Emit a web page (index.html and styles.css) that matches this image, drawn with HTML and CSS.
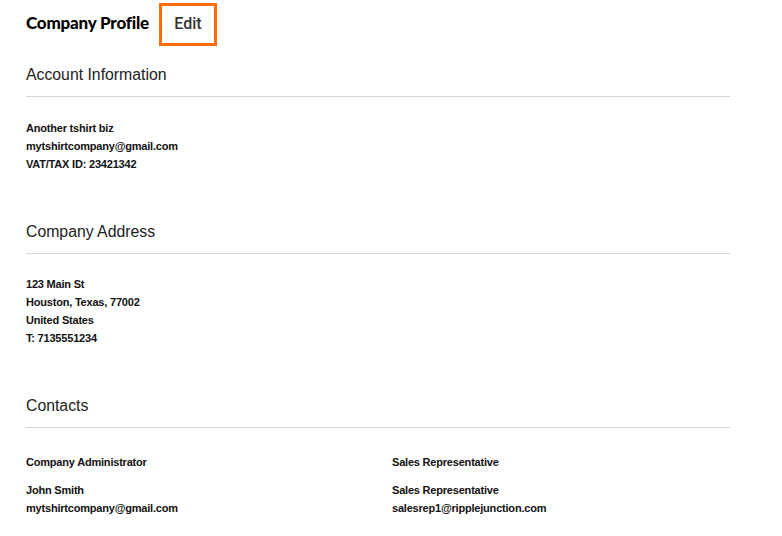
FILE: index.html
```html
<!DOCTYPE html>
<html>
<head>
<meta charset="utf-8">
<link rel="stylesheet" href="styles.css">
</head>
<body>
<div class="page">
  <div class="title-row">
    <h1 class="title">Company Profile</h1>
    <span class="edit">Edit</span>
  </div>

  <section class="block first">
    <h2 class="block-title">Account Information</h2>
    <div class="block-body">
      <div class="line">Another tshirt biz</div>
      <div class="line">mytshirtcompany@gmail.com</div>
      <div class="line">VAT/TAX ID: 23421342</div>
    </div>
  </section>

  <section class="block">
    <h2 class="block-title">Company Address</h2>
    <div class="block-body">
      <div class="line">123 Main St</div>
      <div class="line">Houston, Texas, 77002</div>
      <div class="line">United States</div>
      <div class="line">T: 7135551234</div>
    </div>
  </section>

  <section class="block">
    <h2 class="block-title">Contacts</h2>
    <div class="contacts">
      <div class="contact">
        <div class="line role">Company Administrator</div>
        <div class="line">John Smith</div>
        <div class="line">mytshirtcompany@gmail.com</div>
      </div>
      <div class="contact">
        <div class="line role">Sales Representative</div>
        <div class="line">Sales Representative</div>
        <div class="line">salesrep1@ripplejunction.com</div>
      </div>
    </div>
  </section>
</div>
</body>
</html>
```

FILE: styles.css
```css
html, body {
  margin: 0;
  padding: 0;
  background: #ffffff;
}
.page {
  width: 704px;
  padding: 3px 0 0 26px;
  font-family: "Liberation Sans", Arial, sans-serif;
  color: #111;
}
.title-row {
  display: flex;
  align-items: center;
  height: 43px;
}
.title {
  margin: 0 0 5px 0;
  font-family: Lato, "Liberation Sans", sans-serif;
  font-weight: 900;
  font-size: 17px;
  letter-spacing: -0.2px;
  color: #000;
}
.edit {
  margin-left: 10px;
  box-sizing: border-box;
  height: 43px;
  width: 58px;
  border: 3px solid #ff6d0a;
  display: flex;
  align-items: center;
  justify-content: center;
  font-family: Roboto, "Liberation Sans", sans-serif;
  font-weight: 500;
  font-size: 16px;
  color: #333;
  padding-bottom: 3px;
}
.block {
  margin-top: 48px;
}
.block.first {
  margin-top: 18px;
}
.block-title {
  margin: 0;
  font-weight: normal;
  font-size: 15.8px;
  line-height: 20px;
  color: #222;
  padding: 1px 0 11px 0;
  border-bottom: 1px solid #d6d6d6;
}
.block-body {
  padding-top: 21px;
}
.first .block-body {
  padding-top: 22px;
}
.line {
  font-weight: bold;
  font-size: 11px;
  letter-spacing: -0.2px;
  line-height: 18px;
  color: #111;
}
.contacts {
  display: grid;
  grid-template-columns: 366px 1fr;
  padding-top: 25px;
}
.role {
  margin-bottom: 10px;
}
```
